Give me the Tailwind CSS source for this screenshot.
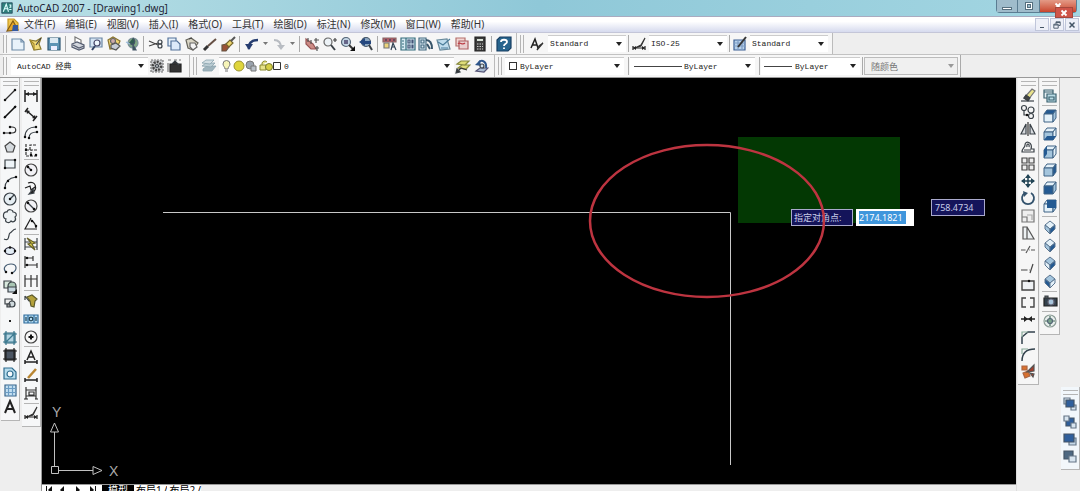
<!DOCTYPE html>
<html lang="zh-CN">
<head>
    <meta charset="UTF-8">
    <meta name="viewport" content="width=device-width, initial-scale=1.0">
    <title>AutoCAD 2007 - [Drawing1.dwg]</title>
    <script src="https://cdn.jsdelivr.net/npm/@tailwindcss/browser@4"></script>
</head>
<body class="flex h-screen flex-col overflow-hidden bg-[#eeeeee] font-['Noto_Sans','Noto_Sans_CJK_SC',sans-serif] text-[10px] text-[#333]">
    <header class="relative flex h-[17px] shrink-0 items-start border-b border-[#a9abc0] bg-linear-to-r from-[#b9e0e6] via-[#8fc8d8] to-[#a3d6e2]">
        <div class="flex h-4 items-center gap-1 pl-px">
            <svg viewBox="0 0 16 16" class="size-3" fill="none"><path d="M1 1h14v14H1z" fill="#2e7f7c" stroke="#245"/><path d="M3 13 7 3l3 10M4 9h6M11 4h2v3h-2M11 10h3" stroke="#dff" stroke-width="1.500"/></svg>
            <h1 class="text-[10px] leading-4 text-[#223]">AutoCAD 2007 - [Drawing1.dwg]</h1>
        </div>
        <div class="mr-[3px] ml-auto flex h-[13px] rounded-b border border-t-0 border-[#5b7d92]">
            <button aria-label="最小化" class="flex w-[21px] items-center justify-center border-r border-[#5b7d92] bg-[#9fbccb]"><span class="mt-1 h-[3px] w-2.5 border border-[#56707f] bg-white"></span></button>
            <button aria-label="还原" class="flex w-[22px] items-center justify-center border-r border-[#5b7d92] bg-[#9fbccb]"><span class="flex h-2 w-2 items-center justify-center border border-[#56707f] bg-white"><span class="h-1 w-1 border border-[#56707f] bg-[#9fbccb]"></span></span></button>
            <button aria-label="关闭" class="flex w-9 justify-center bg-linear-to-b from-[#e39a86] to-[#c8442c] pt-0.5"><svg viewBox="0 0 8 8" class="size-2"><path d="M1.500 1.500 6.500 6.500M6.500 1.500 1.500 6.500" stroke="#fff" stroke-width="1.800"/></svg></button>
        </div>
        <button aria-label="关闭提示" class="absolute top-[7px] right-[7px] z-10 flex h-[11px] w-[18px] items-center justify-center border border-[#a5483c] bg-[#cf5448]">
            <svg viewBox="0 0 8 8" class="size-2"><path d="M1.500 1.500 6.500 6.500M6.500 1.500 1.500 6.500" stroke="#fff" stroke-width="1.800"/></svg>
        </button>
    </header>

    <nav class="flex h-4 shrink-0 items-center border-b border-[#c4c6d8] bg-linear-to-b from-white from-30% to-[#d6daee] pl-1">
        <div class="mr-0.5 flex" data-icons="doc"></div>
        <ul class="flex gap-2.5 leading-[15px] whitespace-nowrap">
            <li><a href="#">文件(F)</a></li>
            <li><a href="#">编辑(E)</a></li>
            <li><a href="#">视图(V)</a></li>
            <li><a href="#">插入(I)</a></li>
            <li><a href="#">格式(O)</a></li>
            <li><a href="#">工具(T)</a></li>
            <li><a href="#">绘图(D)</a></li>
            <li><a href="#">标注(N)</a></li>
            <li><a href="#">修改(M)</a></li>
            <li><a href="#">窗口(W)</a></li>
            <li><a href="#">帮助(H)</a></li>
        </ul>
        <div class="mr-px ml-auto flex gap-px">
            <button aria-label="最小化图形" class="flex h-[13px] w-3.5 items-center justify-center border border-[#c0c6da] bg-[#eef0f8]"><svg viewBox="0 0 8 8" class="size-2"><path d="M2 6.500h4" stroke="#456"/></svg></button>
            <button aria-label="还原图形" class="flex h-[13px] w-3.5 items-center justify-center border border-[#c0c6da] bg-[#eef0f8]"><svg viewBox="0 0 8 8" class="size-2"><path d="M3 3V.8h4.200v3.700H5.500M.8 3.200h4.400v4H.8zM1 4h4M3 1.500h4" fill="none" stroke="#456" stroke-width=".9"/></svg></button>
            <button aria-label="关闭图形" class="flex h-[13px] w-3.5 items-center justify-center border border-[#c0c6da] bg-[#eef0f8]"><svg viewBox="0 0 8 8" class="size-2"><path d="m1.500 1.500 5 5M6.500 1.500l-5 5" stroke="#456" stroke-width="1.500"/></svg></button>
        </div>
    </nav>

    <!-- standard + styles toolbars -->
    <div class="flex h-[22px] shrink-0 border-b border-[#c2c2c2] bg-[#eeeeee] pl-[3px] font-['Liberation_Mono','Noto_Sans_CJK_SC',monospace] text-[8px]">
        <div class="flex w-[514px] items-center border-r border-[#bbb] bg-[#f6f6f6]">
            <span class="mr-0.5 h-[18px] w-1 border-x border-[#b5b5b5]"></span>
            <div class="flex items-center" data-icons="new open save | plot preview publish dwf | cut copy paste match brush | undo ^ redo ^ | pan zoom zoomwin zoomprev | props dcenter palette sheet markup calc | help"></div>
        </div>
        <div class="flex w-[316px] items-center border-r border-[#bbb] bg-[#f6f6f6]">
            <span class="mr-0.5 ml-[3px] h-[18px] w-1 border-x border-[#b5b5b5]"></span>
            <div class="flex w-[22px] justify-center" data-icons="tstyle"></div>
            <div class="relative flex-1 text-[#222]" data-caret>
                <select aria-label="文字样式" class="h-[17px] w-full appearance-none border-t border-[#ccc] bg-white pl-0.5"><option>Standard</option></select>
            </div>
            <div class="ml-0.5 flex w-[21px] justify-center border-l border-[#aaa]" data-icons="dstyle"></div>
            <div class="relative flex-1 text-[#222]" data-caret>
                <select aria-label="标注样式" class="h-[17px] w-full appearance-none border-t border-[#ccc] bg-white pl-0.5"><option>ISO-25</option></select>
            </div>
            <div class="ml-0.5 flex w-[21px] justify-center border-l border-[#aaa]" data-icons="tabstyle"></div>
            <div class="relative mr-1 flex-1 text-[#222]" data-caret>
                <select aria-label="表格样式" class="h-[17px] w-full appearance-none border-t border-[#ccc] bg-white pl-0.5"><option>Standard</option></select>
            </div>
        </div>
    </div>

    <!-- workspace, layers and properties toolbars -->
    <div class="flex h-[23px] shrink-0 border-b border-[#999] bg-[#eeeeee] pl-[3px] font-['Liberation_Mono','Noto_Sans_CJK_SC',monospace] text-[8px]">
        <div class="flex w-[187px] items-center border-r border-[#bbb] bg-[#f6f6f6]">
            <span class="mr-1 h-[18px] w-1 border-x border-[#b5b5b5]"></span>
            <div class="relative w-[137px] text-[#222]" data-caret>
                <select aria-label="工作空间" class="h-[18px] w-full appearance-none border-t border-[#ccc] bg-white pl-1.5"><option>AutoCAD 经典</option></select>
            </div>
            <div class="flex" data-icons="gear myws"></div>
        </div>
        <div class="flex w-[305px] items-center border-r border-[#bbb] bg-[#f6f6f6]">
            <span class="mr-0.5 ml-[3px] h-[18px] w-1 border-x border-[#b5b5b5]"></span>
            <div class="flex w-5 justify-center" data-icons="layers"></div>
            <div class="relative w-[235px] text-[#222]" data-caret>
                <select aria-label="图层" class="h-[18px] w-full appearance-none border-t border-[#ccc] bg-white pl-[65px]"><option>0</option></select>
                <svg viewBox="0 0 64 16" class="pointer-events-none absolute top-px left-0 h-4 w-16" fill="none" stroke="#777">
                    <path d="M6 11C6 9 4 8 4 6a3.500 3.500 0 0 1 7 0c0 2-2 3-2 5zM6 13h3" fill="#f7f5b8"/>
                    <circle cx="20" cy="8" r="5" fill="#dfd53c" stroke="#9a9230"/>
                    <circle cx="31" cy="7" r="4" fill="#9aa3ad"/><path d="M32 8h5v5h-5z" fill="#b8c0c8"/>
                    <path d="M43 7V5a3 3 0 0 1 5-1M41 7h6v5h-6z" stroke="#8a8a30" fill="#e6e28a"/><circle cx="50" cy="9" r="3.500" fill="#d6cf45" stroke="#777a30"/>
                    <path d="M54.500 4.500h7v7h-7z" fill="#fff" stroke="#333"/>
                </svg>
            </div>
            <div class="flex" data-icons="laycur layprev"></div>
        </div>
        <div class="flex w-[466px] items-center border-r border-[#aaa] bg-[#f6f6f6]">
            <span class="mr-[3px] ml-[3px] h-[18px] w-1 border-x border-[#b5b5b5]"></span>
            <div class="relative w-[119px] text-[#222]" data-caret>
                <select aria-label="颜色" class="h-[18px] w-full appearance-none border-t border-[#ccc] bg-white pl-[15px]"><option>ByLayer</option></select>
                <span class="pointer-events-none absolute top-[5px] left-1 size-2 border border-[#333] bg-white"></span>
            </div>
            <div class="relative ml-1 w-[127px] border-l border-[#aaa] pl-px text-[#222]" data-caret>
                <select aria-label="线型" class="h-[18px] w-full appearance-none border-t border-[#ccc] bg-white pl-[54px]"><option>ByLayer</option></select>
                <span class="pointer-events-none absolute top-[9px] left-[5px] h-px w-12 bg-[#444]"></span>
            </div>
            <div class="relative ml-1 w-[101px] border-l border-[#aaa] pl-px text-[#222]" data-caret>
                <select aria-label="线宽" class="h-[18px] w-full appearance-none border-t border-[#ccc] bg-white pl-[34px]"><option>ByLayer</option></select>
                <span class="pointer-events-none absolute top-[9px] left-1 h-px w-7 bg-[#444]"></span>
            </div>
            <div class="relative ml-0.5 w-[96px] border-l border-[#aaa] pl-px text-[#999]" data-caret>
                <select aria-label="打印样式" disabled class="h-[18px] w-full appearance-none border border-[#bbb] bg-[#f0f0f0] pt-[3px] pl-1.5 text-[9px] leading-3 text-[#777]"><option>随颜色</option></select>
            </div>
        </div>
    </div>

    <main class="flex min-h-0 flex-1">
        <aside class="flex w-[42px] shrink-0 items-start gap-0.5 border-r border-[#999] pl-px">
            <div class="flex h-[343px] w-[19px] flex-col items-center justify-between border-r border-b border-[#b5b5b5] bg-[#f6f7f8] pt-[3px] pb-1" data-icons="= line xline pline polygon rect arc circle cloud spline ellipse earc insert block point hatch gradient region table mtext"></div>
            <div class="flex h-[349px] w-[19px] flex-col items-center justify-between border-r border-b border-[#b5b5b5] bg-[#f6f7f8] pt-[3px] pb-1" data-icons="= dlin dali darc dord - drad djog ddia dang - dquick dbase dcont - dlead dtol dcen - dedit dtedit dupd - dstyle"></div>
        </aside>

        <section class="flex min-w-0 flex-1 flex-col">
            <div class="relative min-h-0 flex-1 overflow-hidden bg-black">
                <svg class="absolute inset-0 h-full w-full" fill="none">
                    <rect x="696" y="59" width="162" height="86" fill="#033803"/>
                    <path d="M121 134.500H688.500V387" stroke="#c8c8c8"/>
                    <g stroke="#c0c0c0">
                        <path d="M9.500 388.500h7v7h-7zM12.500 388V354M17 392.500h34M12.500 345l-4 9h8zM60 392.500l-9-4v8z"/>
                    </g>
                </svg>
                <span class="absolute top-[326px] left-2.5 font-['Liberation_Sans',sans-serif] text-sm leading-4 text-[#aaa]">Y</span>
                <span class="absolute top-[385px] left-[67px] font-['Liberation_Sans',sans-serif] text-sm leading-4 text-[#aaa]">X</span>
                <label for="corner" class="absolute top-[131px] left-[749px] h-[17px] w-[62px] border border-[#a9a9cc] bg-[#14145a] pl-0.5 text-[9px] leading-[15px] whitespace-nowrap text-[#c8cce8]">指定对角点:</label>
                <div class="absolute top-[131px] left-[814px] flex h-[17px] w-[58px] items-center bg-white px-[3px]">
                    <input id="corner" value="2174.1821" class="h-[13px] w-[47px] bg-[#3f96dc] text-[9px] text-white">
                </div>
                <output class="absolute top-[121px] left-[889px] h-[17px] w-[54px] border border-[#a9a9cc] bg-[#14145a] pl-[3px] text-[9px] leading-[15px] text-[#c8cce8]">758.4734</output>
                <svg class="pointer-events-none absolute inset-0 h-full w-full"><ellipse cx="665" cy="143" rx="117" ry="76" fill="none" stroke="#bd3440" stroke-width="2.500"/></svg>
            </div>
            <!-- layout tabs, cut off by the window edge -->
            <div class="flex h-[7px] shrink-0 items-start overflow-hidden border-t border-[#999] bg-[#eeeeee] text-[10px] leading-[10px]">
                <svg viewBox="0 0 60 12" class="h-3 w-[60px] shrink-0 bg-white" fill="#111"><path d="M4 1h1v8H4zM10 1v8L6 5zM22 1v8l-4-4zM34 1v8l4-4zM48 1v8l4-4zM53 1h1v8h-1z"/></svg>
                <button class="bg-black px-1.5 leading-[10px] text-white">模型</button>
                <button class="bg-white px-0.5 leading-[10px] text-black">布局1</button>
                <span class="bg-white text-black">/</span>
                <button class="bg-white px-0.5 leading-[10px] text-black">布局2</button>
                <span class="bg-white text-black">/</span>
            </div>
        </section>

        <aside class="flex w-16 shrink-0 items-start gap-px border-l border-[#ddd] pl-px">
            <div class="flex h-[307px] w-[21px] shrink-0 flex-col items-center justify-between border-r border-b border-[#b5b5b5] bg-[#f6f6f6] pt-[3px] pb-1" data-icons="= erase mcopy mirror offset array move rotate scale stretch trim extend breakpt break join chamfer fillet explode"></div>
            <div class="flex h-[257px] w-5 shrink-0 flex-col items-center justify-between border-r border-b border-[#b5b5b5] bg-[#f6f6f6] pt-[3px] pb-1" data-icons="= views - vtop vbottom vleft vright vfront vback - sw se ne nw - camera - target"></div>
            <div class="mb-[21px] flex h-[83px] w-[19px] shrink-0 flex-col items-center justify-between self-end border-r border-b border-[#b5b5b5] bg-[#f2f7fb] pt-[3px] pb-1" data-icons="= front back above under"></div>
        </aside>
    </main>

    <script>
        // 16x16 artwork, stroked by default
        const dot = (x, y) => `<path d="M${x} ${y}h0" stroke="#111" stroke-width="2.500" stroke-linecap="round"/>`;
        const dots = (...p) => p.map(([x, y]) => dot(x, y)).join('');
        const cube = (top, left, right) =>
            `<g stroke="#3f6385" stroke-width="1"><path d="M2 6l3-4h9l-3 4z" fill="${top}"/><path d="M2 6h9v8H2z" fill="${left}"/><path d="M11 6l3-4v8l-3 4z" fill="${right}"/></g>`;
        const iso = (top, left, right) =>
            `<g stroke="#5b7590" stroke-width="1"><path d="M8 2l5 4-5 4-5-4z" fill="${top}"/><path d="M3 6l5 4v5l-5-5z" fill="${left}"/><path d="M13 6l-5 4v5l5-5z" fill="${right}"/></g>`;
        const L = '#e4f1f9', M = '#a4c5dd', D = '#245a92';

        const icons = {
            doc: '<path d="M3 2h6l4 4v7H3z" fill="#f0c552" stroke="#c99a20"/><path d="M2 14 8 4l5 9z" fill="#e5a62a" stroke="#835c13"/><path d="M8 8h5v6H7z" fill="#3559a0" stroke="none"/>',
            new: '<path d="M2 3h9l3 3v8H2z" fill="#e8f2fa" stroke="#6f8ca8"/><path d="M11 3v3h3" stroke="#6f8ca8"/>',
            open: '<path d="M2 4l6 1 5-3-2 6 2 5-7 1z" fill="#f2dc7a" stroke="#8a7a30"/><path d="M2 4l4 4v6" stroke="#a98c2a"/><path d="M8 9l5-7" stroke="#444"/>',
            save: '<path d="M2 2h12v12H2z" fill="#5e94b4" stroke="#2f5873"/><path d="M4 2h8v5H4z" fill="#dce9f2" stroke="none"/><path d="M5 10h6v4H5z" fill="#eef" stroke="none"/>',
            plot: '<path d="M5 6V1l6 3v4" fill="#fff" stroke="#777"/><path d="M2 8l5-2 7 3v3l-5 2-7-3z" fill="#d2d6dd" stroke="#555d70"/><path d="m3 9 6 3 5-2" stroke="#555d70"/>',
            preview: '<path d="M2 2h12v9H2z" fill="#d5e5f4" stroke="#6c86a3"/><circle cx="9" cy="7" r="3" fill="#eef7fd" stroke="#446"/><path d="m7 10-3 4" stroke="#346" stroke-width="2"/>',
            publish: '<path d="M2 4l5-3 7 4-3 7-7 1z" fill="#f0d674" stroke="#8a7430"/><circle cx="7" cy="5" r="2.500" fill="#caa" stroke="#666"/><path d="M5 9l5-2 4 3-4 4-5-2z" fill="#c7ccd6" stroke="#555"/>',
            dwf: '<circle cx="9" cy="7" r="5" fill="#7fa882" stroke="#7b8f99"/><path d="M9 2c2 2 3 4 0 7l-4-2M9 9l3 5H9z" fill="#315c50" stroke="#456"/><path d="m2 6 4 2" stroke="#9bd"/>',
            cut: '<path d="M1 5l9 4M1 10l9-3" stroke="#444"/><circle cx="12" cy="6" r="2"/><circle cx="12" cy="10" r="2"/>',
            copy: '<path d="M2 2h8v8H2z" fill="#e5f0fa" stroke="#54729a"/><path d="M5 5h6l3 3v6H5z" fill="#dceafa" stroke="#54729a"/>',
            paste: '<path d="M2 4l5-2 7 5-5 7-5-2z" fill="#d9d5c4" stroke="#67655c"/><path d="M6 7h5l2 4-4 3-3-3z" fill="#f5f5f5" stroke="#666"/><path d="M5 3l3-1" stroke="#444"/>',
            match: '<path d="M2 14l4-4" stroke="#333" stroke-width="3"/><path d="m6 10 8-7" stroke="#665045" stroke-width="2"/>',
            brush: '<path d="M2 9l5-1 2 3-3 4H2z" fill="#9a5236" stroke="#654"/><path d="m6 8 4-4 3 3-4 4z" fill="#ecd46e" stroke="#75652b"/><path d="m11 5 4-4" stroke="#555" stroke-width="2"/>',
            undo: '<path d="M5 13C4 8 7 4 14 4" stroke="#263d70" stroke-width="2.500"/><path d="M1 8h8l-4 6z" fill="#263d70" stroke="none"/>',
            redo: '<path d="M3 4c5 0 7 3 7 8" stroke="#b8bcc2" stroke-width="2"/><path d="M6 9h8l-4 5z" fill="#b8bcc2" stroke="none"/>',
            pan: '<path d="M2 3l7 5 3 5H7L2 8z" fill="#cd8c86" stroke="#955"/><path d="M4 2v4M7 4v4M12 2v5M10 4h5M13 10v5M11 12h4" stroke="#555"/>',
            zoom: '<circle cx="6" cy="6" r="4" fill="#edf3f7" stroke="#666"/><path d="m9 9 4 5" stroke-width="2"/><path d="M11 4h4M13 2v4" stroke="#444"/>',
            zoomwin: '<circle cx="6" cy="6" r="4.500" fill="#c3d5e4" stroke="#567"/><path d="M4 4h4v4H4z" fill="#668" stroke="none"/><path d="m9 9 4 4" stroke="#333" stroke-width="2"/><path d="M15 10v5h-5z" fill="#111" stroke="none"/>',
            zoomprev: '<circle cx="8" cy="6" r="4.500" fill="#8ea9c2" stroke="#456"/><path d="M1 6l6-4v3h6v3H7v2z" fill="#25487f" stroke="none"/><path d="m11 9 3 5" stroke-width="2"/>',
            props: '<path d="M1 2h13v4H1z" fill="#b65c68" stroke="#866"/><path d="M2 7h5v5H2z" fill="#ecd47b" stroke="#777"/><path d="m9 14 2-7 3 7M10 11h3M4 3v2M8 3v2M12 3v2" stroke="#345"/>',
            dcenter: '<path d="M1 2h14v12H1z" fill="#d6eaf2" stroke="#356c7c"/><path d="M6 2v12M2 5h2M2 8h2M2 11h2" stroke="#356c7c"/><path d="M8 4h2v3H8zM12 4h1v3h-1zM8 9h2v3H8zM12 9h1v3h-1z" stroke="#457"/>',
            palette: '<path d="M1 2h7v12H1z" fill="#d8e8f2" stroke="#456b80"/><path d="M3 4h3v3H3zM3 9h3v3H3z" stroke="#456b80"/><path d="M8 4c4 0 6 3 6 9M9 8l3 5" stroke="#39566b" stroke-width="2"/>',
            sheet: '<path d="M1 4l10-1 3 10-10 1z" fill="#c0dded" stroke="#68899b"/><path d="M2 6l5 3 7-6M5 12h7" stroke="#4d7e9b"/>',
            markup: '<path d="M2 2h9v8H2z" fill="#f3d6d4" stroke="#b5706d"/><path d="M5 5h9v8H5z" fill="#e9d0d0" stroke="#ad6062"/><path d="M4 8c2-3 4 2 7-1" stroke="#bc3d45"/>',
            calc: '<path d="M3 1h10v14H3z" fill="#3c3c3c" stroke="#222"/><path d="M5 3h6v2H5z" fill="#d9e2d9" stroke="none"/><path d="M5 8h6M5 10.500h6M5 13h6" stroke="#ccc" stroke-dasharray="1.500 1"/>',
            help: '<path d="M1 4l3-3h11v11l-3 3H1z" fill="#27648d" stroke="#183f62"/><path d="M5 6c0-3 6-3 6 0 0 2-3 1.500-3 4M8 11.500v1.500" stroke="#fff" stroke-width="1.800"/>',
            tstyle: '<path d="m2 12 4-9 3 9M3 9h5" stroke="#222" stroke-width="1.500"/><path d="M8 14l6-7-4 3z" fill="#777" stroke="#333"/>',
            dstyle: '<path d="M2 12h12M2 10v4M14 10v4" stroke="#222"/><path d="m4 12 6-3 4-7-4 8z" fill="#555" stroke="#333"/><path d="M2 12l3-2v4zM14 12l-3-2v4z" fill="#222" stroke="none"/>',
            tabstyle: '<path d="M2 4h11v10H2z" fill="#b9d2eb" stroke="#3b5f94"/><path d="M2 7h11M2 10h11M6 4v10M10 4v10" stroke="#7d9cc4"/><path d="m6 11 8-10" stroke="#333" stroke-width="2"/>',
            gear: '<path d="M2 2h12v12H2z" fill="#c9cbce" stroke="#777" stroke-dasharray="2 1"/><circle cx="8" cy="8" r="4" stroke="#444" stroke-width="2.500" stroke-dasharray="2 1"/><circle cx="8" cy="8" r="1.500"/>',
            myws: '<path d="M3 6h11v8H3z" fill="#333" stroke="#222"/><path d="M1 2h3M7 2h3M12 2h2M1 5v9" stroke="#777"/><path d="m5 6 3-3 4 4" fill="#333"/>',
            layers: '<g stroke="#8aa3ad" stroke-width=".8"><path d="M2 11l4-3h9l-4 5H2z" fill="#9fb4bd"/><path d="M1 8l4-3h9l-4 4z" fill="#b9cbd2"/><path d="M1 5l4-3h8l-4 4z" fill="#d3dfe4"/></g>',
            laycur: '<path d="M2 6l4-3h8l-4 4zM3 10l4-3h8l-4 4z" fill="#dfdd78" stroke="#8a8c40"/><path d="m2 14 4-4 6 2" stroke="#333"/><path d="m1 15 1-4 3 3z" fill="#333"/>',
            layprev: '<path d="M3 13l4-3h8l-4 4z" fill="#a8bad0" stroke="#557"/><path d="M13 10C14 4 9 1 6 4" stroke="#2f568b" stroke-width="2"/><path d="M2 7l5-5 1 6z" fill="#2f568b" stroke="none"/><circle cx="9" cy="8" r="2" fill="#cfe0ee"/>',
            line: '<path d="m3 13 10-10" stroke="#333"/>' + dots([3, 13], [13, 3]),
            xline: '<path d="M2 14 14 2" stroke="#111" stroke-width="1.600"/>' + dots([3, 13], [13, 3]),
            pline: '<path d="M2 11h8c5 0 5-6 0-6H8" stroke="#333"/>' + dots([2, 11], [8, 11], [8, 5]),
            polygon: '<path d="M8 3l5 4-2 6H5L3 7z" fill="#d5dade" stroke="#444"/>',
            rect: '<path d="M3 4h10v8H3z" fill="#eef4f8"/>' + dots([3, 12], [13, 4]),
            arc: '<path d="M3 14C3 8 7 4 14 3"/>' + dots([3, 14], [6, 7], [14, 3]),
            circle: '<circle cx="8" cy="8" r="6" fill="#e5edf2"/><path d="m8 8 4-4"/>' + dots([8, 8]),
            cloud: '<path d="M5 4c1-4 6-2 6 0 4 0 4 4 2 5 2 4-2 6-4 4-2 3-7 1-5-2-4-1-3-8 1-7z" fill="#eef2f4"/>',
            spline: '<path d="M2 13c6 3 4-5 6-6s3-4 6-4"/>',
            ellipse: '<ellipse cx="8" cy="8" rx="5" ry="3.500" fill="#e3edf5" stroke="#223"/>' + dots([3, 8], [8, 4.5], [13, 8]),
            earc: '<path d="M4 12c-4-4 0-8 5-8 6 0 7 6 1 9" stroke="#445b72"/>' + dots([4, 12], [10, 13]),
            insert: '<path d="M2 3h7v7H2z" fill="#d8e8dd"/><circle cx="10" cy="8" r="4" fill="#a9c6b4" /><path d="M6 9h8v5H6z" fill="#c7d7df"/><path d="M15 11v5h-5z" fill="#111" stroke="none"/>',
            block: '<path d="M3 4h7v5H3z" fill="#eee"/><circle cx="10" cy="9" r="3" fill="#cfd9dd"/><path d="M5 9h3v3H5z" fill="#999"/>',
            point: '<path d="M7 7h2v2H7z" fill="#222" stroke="none"/>',
            hatch: '<path d="M3 3h10v10H3z" fill="#b4d5e3" stroke="#286279"/><path d="M1 4h14M1 12h14M4 1v14M12 1v14M4 12l8-8" stroke="#3d7a90"/>',
            gradient: '<path d="M3 3h10v10H3z" fill="#4b5562" stroke="#111"/><path d="M1 4h14M1 12h14M4 1v14M12 1v14" stroke="#222"/>',
            region: '<path d="M2 3h8l4 4v7H2z" fill="#b7dced" stroke="#2f6c8e"/><circle cx="8" cy="9" r="3" fill="#f5fafd" stroke="#2f6c8e"/>',
            table: '<path d="M3 3h11v11H3z" fill="#c4e0f2" stroke="#37648a"/><path d="M3 6.500h11M3 10.500h11M6.500 3v11M10.500 3v11" stroke="#6b9cc4"/>',
            mtext: '<path d="m3 14 5-12 5 12M5 10h6" stroke="#222" stroke-width="2"/>',
            dlin: '<path d="M2 2v12M14 2v12M2 6h12" stroke="#222" stroke-width="1.500"/><path d="M2 6l4-2v4zM14 6l-4-2v4z" fill="#222" stroke="none"/>',
            dali: '<path d="m4 5 8 7M5 2 2 6M14 10l-4 5" stroke="#222" stroke-width="1.500"/><path d="m3 4 4 1-3 3zM13 13l-4-1 3-3z" fill="#222" stroke="none"/>',
            darc: '<path d="M2 13C2 7 6 3 13 3M6 14c0-4 3-6 8-6"/>' + dots([2, 13], [13, 3], [6, 14], [14, 8]),
            dord: '<path d="M3 2v12h11M3 8h4V3h7M8 13V8h6" stroke="#333" stroke-dasharray="3 1"/>' + dots([3, 8], [8, 13], [13, 13]),
            drad: '<circle cx="8" cy="8" r="6" stroke="#444" fill="#f2f2f6"/><path d="M4 4l4 4"/>' + dots([5, 5], [8, 8]),
            djog: '<path d="M5 3c8-3 10 6 4 10M2 8l5-2 1 4 4-3" stroke="#222"/><path d="m6 14 4-5 1 4z" fill="#222"/>',
            ddia: '<circle cx="8" cy="8" r="6" stroke="#444" fill="#f2f2f6"/><path d="m4 4 8 8"/>' + dots([5, 5], [11, 11]),
            dang: '<path d="M8 2 2 13h12M8 4c3 2 5 4 5 8" stroke="#222"/>' + dots([9, 5], [13, 10]),
            dquick: '<path d="M2 2v12M14 2v12M2 6h12M2 11h12"/><path d="m4 2 8 5-3 1 3 6-7-6 3-1z" fill="#dbd04a" stroke="#66602a"/>',
            dbase: '<path d="M2 2v12M2 4h8M2 11h12M10 2v5M14 9v5" stroke="#333"/>' + dots([4, 4], [4, 11]),
            dcont: '<path d="M2 2v12M8 2v12M14 2v12M2 6h12" stroke="#333"/>',
            dlead: '<path d="m2 3 4 5h6M2 3v4" /><path d="M4 4l5-2 5 4-2 2-1 6-3-1-1-5z" fill="#b4a13b" stroke="#5c5a2c"/>',
            dtol: '<path d="M1 4h14v8H1zM5 4v8M11 4v8" fill="#b7ddf4" stroke="#2f6c9c"/><circle cx="8" cy="8" r="1.800" stroke="#245"/><path d="M13 6v4M3 6v4" stroke="#245"/>',
            dcen: '<circle cx="8" cy="8" r="6" fill="#f6f6f6" stroke="#444"/><path d="M8 5.500v5M5.500 8h5" stroke="#111" stroke-width="2"/>',
            dedit: '<path d="m4 11 4-9 4 9M5 8h6M2 13h12M2 11v4M14 11v4" stroke="#222" stroke-width="1.500"/>',
            dtedit: '<path d="M2 13h12M2 11v4M14 11v4" stroke="#222" stroke-width="1.500"/><path d="m5 11 8-9" stroke="#b88532" stroke-width="2.500"/>',
            dupd: '<path d="M3 2v12M13 2v12M3 5h10M3 11h10M6 7h5v3H6z" stroke="#333"/><path d="M1 14h4M12 14h3" stroke="#222"/>',
            erase: '<path d="m4 11 8-9 3 2-7 9z" fill="#e9e28b" stroke="#777"/><path d="m4 11 2-3 4 3-2 3z" fill="#444"/><path d="M1 14h13"/>',
            mcopy: '<circle cx="4" cy="4" r="2.500"/><circle cx="11" cy="6" r="3"/><circle cx="11" cy="12" r="2.500"/><path d="M4 7v4h3"/>' + dots([7, 11]),
            mirror: '<path d="M6 3v10H1zM10 3v10h5z" fill="#d6dade"/><path d="M8 1v14" stroke="#333"/>',
            offset: '<path d="M2 13h12v-3h-3C13 3 5 1 5 6c0 3-3 3-3 7z"/><path d="M4 11h7M7 8c-1-4 3-4 2 0" />',
            array: '<path d="M2 2h5v5H2zM9 2h5v5H9zM2 9h5v5H2zM9 9h5v5H9z" fill="#eee" stroke="#444"/>',
            move: '<path d="M8 2v12M2 8h12" stroke="#245" stroke-width="1.500"/><path d="M8 1l3 4H5zM8 15l3-4H5zM1 8l4-3v6zM15 8l-4-3v6z" fill="#245" stroke="none"/>',
            rotate: '<path d="M5 3a6 6 0 1 0 6 0" stroke="#34536d" stroke-width="1.800"/><path d="m3 1 5 2-4 4z" fill="#34536d" stroke="none"/>',
            scale: '<path d="M2 2h12v12H2zM2 9h5v5" fill="#eee" stroke="#777"/><path d="M7 7h5v5" stroke="#aaa"/>',
            stretch: '<path d="M3 2v12h4V2zM7 2l7 12H7" fill="#edf1f3" stroke="#555"/>',
            trim: '<path d="M1 8h4M11 8h4M6 11l4-7" stroke="#555"/><path d="M5 8h5" stroke="#999" stroke-dasharray="1 1"/>',
            extend: '<path d="M1 10h6M13 4l-3 9" stroke="#444"/><path d="M7 10h4" stroke="#999" stroke-dasharray="1 1"/>',
            breakpt: '<path d="M2 4h12v9H2z" fill="#eef1f4" stroke="#444" stroke-width="1.400"/>' + dots([9, 4]),
            break: '<path d="M6 4H2v9h4M10 4h4v9h-4" stroke="#444" stroke-width="1.400"/>',
            join: '<path d="M1 8h14" stroke="#222" stroke-width="1.500"/><path d="M8 8 4 5v6zM8 8l4-3v6z" fill="#222" stroke="none"/>',
            chamfer: '<path d="M2 15V8l6-5h7" stroke="#33424d" stroke-width="1.500"/><path d="M2 8V3h6" stroke="#8a9"/>',
            fillet: '<path d="M2 15C2 7 6 3 15 3" stroke="#33424d" stroke-width="1.500"/><path d="M2 8V3h6" stroke="#8a9"/>',
            explode: '<path d="M2 3h5v4H2zM3 10l5-2 2 5-5 2z" fill="#d9712e" stroke="#a64"/><path d="m7 9 7-7v6zM10 10l4 1-1 3z" fill="#a83d2a" stroke="#555"/>',
            views: '<path d="M2 2h9v8H2z" fill="#e4eef2" stroke="#3c6270"/><path d="M5 6h9v8H5z" fill="#b9dbe5" stroke="#3c6270"/><path d="M2 4h9M7 9h5v3H7z" stroke="#3c6270"/>',
            vtop: cube(D, L, M),
            vbottom: cube(L, M, L) + '<path d="M2 14l3-4h9l-3 4z" fill="#245a92" stroke="none"/>',
            vleft: cube(L, M, L) + '<path d="M2 6l3-4v8l-3 4z" fill="#245a92" stroke="none"/>',
            vright: cube(L, M, D),
            vfront: cube(L, D, M),
            vback: cube(L, L, M) + '<path d="M5 2h9v8H5z" fill="#245a92" stroke="none"/>',
            sw: iso(L, M, D), se: iso(L, M, D), ne: iso(M, L, D), nw: iso(M, D, L),
            camera: '<path d="M2 5h13v8H2z" fill="#34424d" stroke="#222"/><path d="M3 3h3v2H3z" fill="#666"/><circle cx="9" cy="9" r="3" fill="#a8c6dc" stroke="#667"/>',
            target: '<circle cx="8" cy="8" r="6" fill="#e8efec" stroke="#8b9b96"/><path d="M8 3v10M3 8h10" stroke="#456c5d"/><circle cx="8" cy="8" r="2.500" fill="#7ba48d" stroke="#567"/>',
            front: '<path d="M2 2h6v6H2zM9 9h5v5H9z" fill="#d8e5f0" stroke="#678"/><path d="M4 4h8v7H4z" fill="#2f5f9c" stroke="#456"/>',
            back: '<path d="M4 4h8v8H4z" fill="#2f5f9c" stroke="#456"/><path d="M2 2h5v5H2zM9 9h5v5H9z" fill="#d8e5f0" stroke="#678"/>',
            above: '<path d="M7 7h7v7H7z" fill="#c5d8e8" stroke="#678"/><path d="M2 3h10v8H2z" fill="#2f5f9c" stroke="#456"/>',
            under: '<path d="M2 2h9v8H2z" fill="#4d6882" stroke="#456"/><path d="M7 7h7v6H7z" fill="#d8e5f0" stroke="#678"/>'
        };

        const parts = {
            '|': '<span class="mx-[2px] h-4 w-[2px] border-l border-[#aaa]"></span>',
            '-': '<span class="h-px w-[15px] shrink-0 bg-[#b5b5b5]"></span>',
            '=': '<span class="h-[5px] w-[15px] shrink-0 border-y border-[#b5b5b5]"></span>',
            '^': '<button aria-label="更多" class="flex w-[9px] items-center justify-center"><svg viewBox="0 0 5 3" class="h-[3px] w-[5px]"><path d="M0 0h5L2.500 3z" fill="#777"/></svg></button>'
        };

        document.querySelectorAll('[data-icons]').forEach(bar => {
            bar.insertAdjacentHTML('beforeend', bar.dataset.icons.split(' ').map(name => parts[name] ||
                `<button aria-label="${name}" class="flex h-[17px] w-[18px] shrink-0 items-center justify-center"><svg viewBox="0 0 16 16" class="size-4" fill="none" stroke="#3a4147" stroke-width="1.200">${icons[name]}</svg></button>`
            ).join(''));
        });

        document.querySelectorAll('[data-caret]').forEach(box => {
            box.insertAdjacentHTML('beforeend', '<svg viewBox="0 0 6 4" class="pointer-events-none absolute top-[7px] right-1 h-1 w-1.5" fill="currentColor"><path d="M0 0h6L3 4z"/></svg>');
        });
    </script>
</body>
</html>
